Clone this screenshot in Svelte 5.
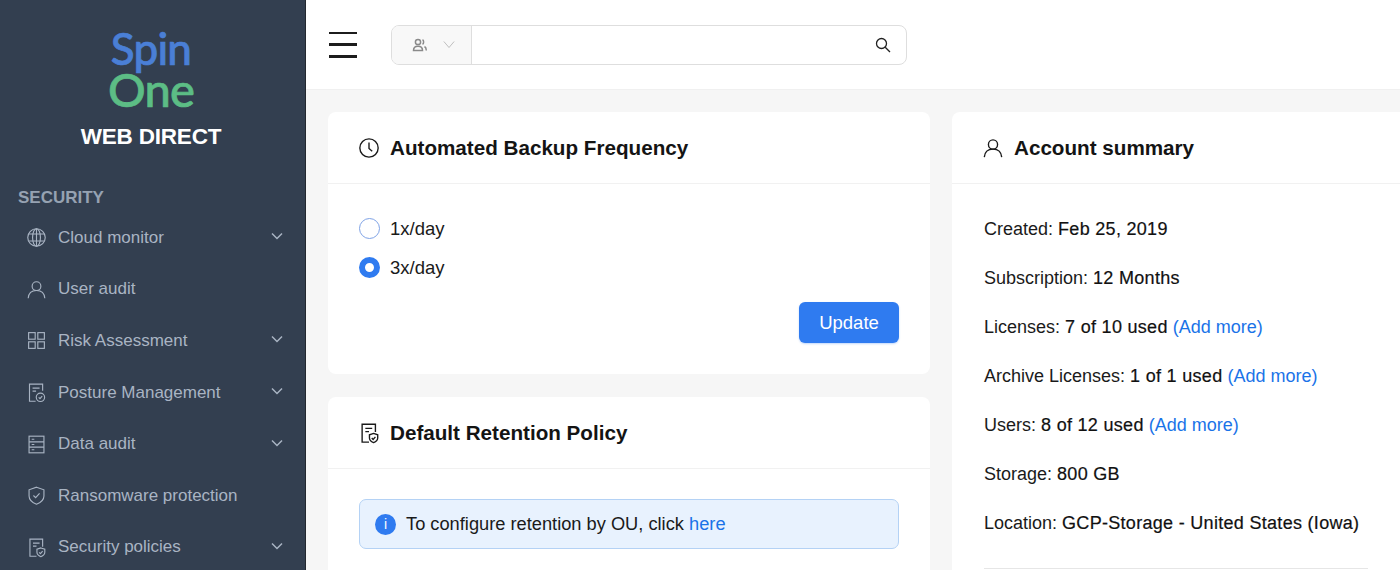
<script>
  const menu = [
    { label: "Cloud monitor", icon: "globe", more: true },
    { label: "User audit", icon: "user", more: false },
    { label: "Risk Assessment", icon: "grid", more: true },
    { label: "Posture Management", icon: "doccheck", more: true },
    { label: "Data audit", icon: "server", more: true },
    { label: "Ransomware protection", icon: "shield", more: false },
    { label: "Security policies", icon: "docshield", more: true },
  ];

  const summary = [
    { label: "Created:", value: "Feb 25, 2019" },
    { label: "Subscription:", value: "12 Months" },
    { label: "Licenses:", value: "7 of 10 used", add: true },
    { label: "Archive Licenses:", value: "1 of 1 used", add: true },
    { label: "Users:", value: "8 of 12 used", add: true },
    { label: "Storage:", value: "800 GB" },
    { label: "Location:", value: "GCP-Storage - United States (Iowa)" },
  ];
</script>

{#snippet userIcon()}
  <circle cx="12" cy="8.2" r="5" />
  <path d="M2.5 22c.4-5 3.6-8.8 9.5-8.8s9.100 3.800 9.500 8.800" />
{/snippet}

{#snippet docShield()}
  <path d="M12 22H4.500V2.500h14.500V11" />
  <path d="M8 7h7.500M8 10.500h4" />
  <path d="M17 12.500l4.500 1.500v3.500c0 2.500-2 4-4.500 5-2.500-1-4.500-2.500-4.500-5V14z" />
  <path d="M15 17.500l1.500 1.500 2.500-2.800" />
{/snippet}

<div class="page">
  <aside class="sidebar">
    <div class="logo">
      <span class="spin">Spin</span>
      <span class="one">One</span>
    </div>
    <div class="product">WEB DIRECT</div>
    <div class="section">SECURITY</div>
    <nav>
      {#each menu as item}
        <div class="item">
          <svg class="item-icon" viewBox="0 0 24 24">
            {#if item.icon === "globe"}
              <circle cx="12" cy="12" r="10" />
              <ellipse cx="12" cy="12" rx="4.500" ry="10" />
              <path d="M12 2v20M3.200 8h17.600M3.200 16h17.600" />
            {:else if item.icon === "user"}
              {@render userIcon()}
            {:else if item.icon === "grid"}
              <rect x="3" y="3" width="7.500" height="7.500" />
              <rect x="13.500" y="3" width="7.500" height="7.500" />
              <rect x="3" y="13.500" width="7.500" height="7.500" />
              <rect x="13.500" y="13.500" width="7.500" height="7.500" />
            {:else if item.icon === "doccheck"}
              <path d="M11 22H4V2.500h15V10" />
              <path d="M7.500 7h8M7.500 10.500h4" />
              <circle cx="16.500" cy="17.500" r="4.800" />
              <path d="M14.500 17.500l1.500 1.500 2.500-2.800" />
            {:else if item.icon === "server"}
              <rect x="3.500" y="2.500" width="17" height="19" />
              <path d="M3.500 9h17M3.500 15h17M6.500 6h3M6.500 12h3M6.500 18h3" />
            {:else if item.icon === "shield"}
              <path d="M12 2.500l8.500 3v7c0 4.500-3.500 7.500-8.500 9.500-5-2-8.500-5-8.500-9.500v-7z" />
              <path d="M8.500 12l2.500 2.500 4.500-5" />
            {:else}
              {@render docShield()}
            {/if}
          </svg>
          <span class="item-label">{item.label}</span>
          {#if item.more}
            <svg class="chev" viewBox="0 0 12 8"><path d="M1 1.500l5 5 5-5" /></svg>
          {/if}
        </div>
      {/each}
    </nav>
  </aside>

  <div class="main">
    <header class="topbar">
      <div class="burger"><span></span><span></span><span></span></div>
      <div class="search">
        <div class="scope">
          <svg class="scope-users" viewBox="0 0 16 14">
            <circle cx="6" cy="4" r="2.600" />
            <path d="M1.500 12.500c0-3 2-4.200 4.500-4.200s4.500 1.200 4.500 4.200z" />
            <path d="M10.500 1.700c1.500.6 1.500 4 0 4.600M12.500 8.500c1.300.7 1.800 2 1.800 4" />
          </svg>
          <svg class="scope-chev" viewBox="0 0 14 9"><path d="M1 1l6 7 6-7" /></svg>
        </div>
        <div class="search-field">
          <svg class="search-icon" viewBox="0 0 16 16">
            <circle cx="6.500" cy="6.500" r="5" />
            <path d="M10.200 10.200L15 15" />
          </svg>
        </div>
      </div>
    </header>

    <div class="content">
      <div class="column">
        <section class="card">
          <div class="card-head">
            <svg class="head-icon" viewBox="0 0 24 24">
              <circle cx="12" cy="12" r="10" />
              <path d="M12 6v6.500l3.500 3" />
            </svg>
            <h2>Automated Backup Frequency</h2>
          </div>
          <div class="backup-body">
            <label class="radio"><span class="dot"></span>1x/day</label>
            <label class="radio"><span class="dot checked"></span>3x/day</label>
            <div class="actions"><button>Update</button></div>
          </div>
        </section>

        <section class="card">
          <div class="card-head">
            <svg class="head-icon" viewBox="0 0 24 24">
              {@render docShield()}
            </svg>
            <h2>Default Retention Policy</h2>
          </div>
          <div class="retention-body">
            <div class="notice">
              <span class="info">i</span>
              <span>To configure retention by OU, click <a href="#here">here</a></span>
            </div>
          </div>
        </section>
      </div>

      <section class="card summary">
        <div class="card-head">
          <svg class="head-icon" viewBox="0 0 24 24">
            {@render userIcon()}
          </svg>
          <h2>Account summary</h2>
        </div>
        <div class="summary-body">
          {#each summary as row}
            <p>
              {row.label} <span class="value">{row.value}</span>
              {#if row.add}
                <a href="#add">(Add more)</a>
              {/if}
            </p>
          {/each}
          <hr />
        </div>
      </section>
    </div>
  </div>
</div>

<style>
  :global(body) {
    margin: 0;
    overflow: hidden;
    font-family: "Liberation Sans", Arial, sans-serif;
  }

  .page {
    display: flex;
    width: 1400px;
    height: 570px;
    overflow: hidden;
  }

  .sidebar {
    flex: 0 0 305px;
    background: #333f50;
    border-right: 1px solid #23282f;
    color: #a9b4c3;
  }

  .logo {
    display: flex;
    flex-direction: column;
    align-items: center;
    padding: 28px 3px 0 0;
    font-family: "Lato", sans-serif;
    font-size: 44px;
    font-weight: 500;
    line-height: 41px;
    letter-spacing: -0.800px;
    -webkit-text-stroke: 0.700px;
  }

  .spin {
    color: #4a7fd6;
  }

  .one {
    color: #5cbd85;
    font-size: 47px;
  }

  .product {
    margin-top: 14px;
    padding-right: 3px;
    text-align: center;
    color: #fff;
    font-weight: 700;
    font-size: 22.500px;
    line-height: 26px;
    letter-spacing: -0.200px;
  }

  .section {
    margin-top: 38px;
    padding-left: 18px;
    color: #96a2b2;
    font-weight: 700;
    font-size: 17px;
    line-height: 20px;
  }

  nav {
    margin-top: 4px;
  }

  .item {
    display: flex;
    align-items: center;
    height: 51.600px;
    padding: 0 22px 0 26px;
    font-size: 17px;
  }

  .item-icon {
    flex: none;
    width: 21px;
    height: 21px;
    margin-right: 11px;
    fill: none;
    stroke: #a9b4c3;
    stroke-width: 1.300;
  }

  .item-label {
    flex: 1;
  }

  .chev {
    width: 12px;
    height: 8px;
    margin-bottom: 3px;
    fill: none;
    stroke: #a9b4c3;
    stroke-width: 1.500;
  }

  .main {
    flex: 1;
    min-width: 0;
    background: #f6f6f6;
  }

  .topbar {
    display: flex;
    align-items: center;
    height: 89px;
    padding-left: 23px;
    background: #fff;
    border-bottom: 1px solid #f0f0f0;
  }

  .burger {
    display: flex;
    flex-direction: column;
    justify-content: space-between;
    width: 28px;
    height: 26px;
  }

  .burger span {
    height: 2.500px;
    background: #1c1c1c;
  }

  .search {
    display: flex;
    width: 514px;
    height: 38px;
    margin-left: 34px;
    border: 1px solid #dedede;
    border-radius: 8px;
    overflow: hidden;
  }

  .scope {
    display: flex;
    align-items: center;
    gap: 15px;
    width: 80px;
    padding-left: 20px;
    box-sizing: border-box;
    background: #f8f8f8;
    border-right: 1px solid #dedede;
  }

  .scope-users {
    width: 16px;
    height: 14px;
    fill: none;
    stroke: #8a8a8a;
    stroke-width: 1.500;
  }

  .scope-chev {
    width: 12px;
    height: 9px;
    fill: none;
    stroke: #b5b5b5;
    stroke-width: 1;
  }

  .search-field {
    flex: 1;
    display: flex;
    align-items: center;
    justify-content: flex-end;
    padding-right: 15px;
  }

  .search-icon {
    width: 16px;
    height: 16px;
    fill: none;
    stroke: #222;
    stroke-width: 1.300;
  }

  .content {
    display: flex;
    gap: 22px;
    padding: 22px 0 0 22px;
  }

  .column {
    flex: 0 0 602px;
    display: flex;
    flex-direction: column;
    gap: 23px;
  }

  .card {
    background: #fff;
    border-radius: 8px;
  }

  .summary {
    flex: 0 0 480px;
    height: 520px;
  }

  .card-head {
    display: flex;
    align-items: center;
    height: 71px;
    padding-left: 30px;
    border-bottom: 1px solid #f1f1f1;
  }

  .head-icon {
    flex: none;
    width: 22px;
    height: 22px;
    margin-right: 10px;
    fill: none;
    stroke: #1a1a1a;
    stroke-width: 1.500;
  }

  h2 {
    margin: 0;
    color: #141414;
    font-size: 20.650px;
    font-weight: 700;
  }

  .backup-body {
    padding: 25px 31px 31px;
  }

  .radio {
    display: flex;
    align-items: center;
    gap: 10px;
    height: 39px;
    color: #1a1a1a;
    font-size: 18.500px;
  }

  .dot {
    width: 21px;
    height: 21px;
    box-sizing: border-box;
    border: 1px solid #7fa3e6;
    border-radius: 50%;
  }

  .dot.checked {
    border: 6.500px solid #2f7bf0;
  }

  .actions {
    display: flex;
    justify-content: flex-end;
    margin-top: 15px;
  }

  button {
    width: 100px;
    height: 41px;
    border: 0;
    border-radius: 6px;
    background: #2f7bf0;
    box-shadow: 0 1px 2px rgba(47, 123, 240, 0.3);
    color: #fff;
    font-family: inherit;
    font-size: 18.500px;
  }

  .retention-body {
    padding: 30px 31px 40px;
  }

  .notice {
    display: flex;
    align-items: center;
    gap: 10px;
    height: 48px;
    padding-left: 15px;
    background: #e8f2fe;
    border: 1px solid #b4d2f5;
    border-radius: 7px;
    color: #1a1a1a;
    font-size: 18.250px;
  }

  .info {
    width: 21px;
    height: 21px;
    border-radius: 50%;
    background: #2f7bf0;
    color: #fff;
    font-size: 14px;
    line-height: 21px;
    text-align: center;
  }

  a {
    color: #1a73e8;
    text-decoration: none;
  }

  .summary-body {
    padding: 21px 32px;
  }

  .summary-body p {
    margin: 0;
    color: #1a1a1a;
    font-size: 18px;
    line-height: 49px;
    white-space: nowrap;
  }

  .value {
    color: #111;
    letter-spacing: 0.300px;
    -webkit-text-stroke: 0.200px;
  }

  hr {
    width: 384px;
    margin: 20px 0 0;
    border: 0;
    border-top: 1px solid #e6e6e6;
  }
</style>
